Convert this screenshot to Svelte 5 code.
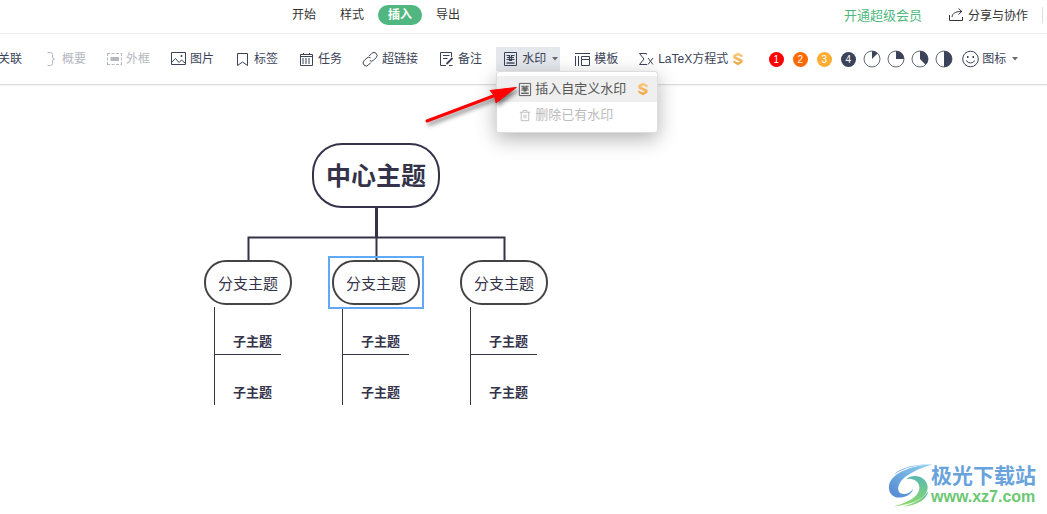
<script>
  const tabs = ["开始", "样式", "插入", "导出"];
  let activeTab = $state("插入");
  let menuOpen = $state(true);

  const tools = [
    { icon: "relation", label: "关联" },
    { icon: "summary", label: "概要", disabled: true },
    { icon: "frame", label: "外框", disabled: true },
    { icon: "image", label: "图片" },
    { icon: "tag", label: "标签" },
    { icon: "task", label: "任务" },
    { icon: "link", label: "超链接" },
    { icon: "note", label: "备注" },
    { icon: "watermark", label: "水印", menu: true },
    { icon: "template", label: "模板" },
    { icon: "sigma", label: "LaTeX方程式", vip: true },
  ];

  const priorities = [1, 2, 3, 4];
  const wedges = [
    { name: "12.5%", d: "M9 9V1A8 8 0 0 1 14.66 3.34Z" },
    { name: "25%", d: "M9 9V1A8 8 0 0 1 17 9Z" },
    { name: "37.5%", d: "M9 9V1A8 8 0 0 1 14.66 14.66Z" },
    { name: "50%", d: "M9 9V1A8 8 0 0 1 9 17Z" },
  ];

  const branches = [
    { x: 0, label: "分支主题", children: ["子主题", "子主题"] },
    { x: 128, label: "分支主题", children: ["子主题", "子主题"] },
    { x: 256, label: "分支主题", children: ["子主题", "子主题"] },
  ];
  let selected = $state(1);
</script>

{#snippet icon(name)}
  <svg class="icon" viewBox="0 0 16 16" aria-hidden="true">
    {#if name === "relation"}
      <path d="M2 12C3 5 8 3 13 5M10 2.5L13.5 5L10.5 8" />
    {:else if name === "summary"}
      <path d="M5.5 1.5H8.5Q10.5 1.5 10.5 3.5V6Q10.5 8 12.5 8Q10.5 8 10.5 10V12.5Q10.5 14.5 8.5 14.5H5.5" />
    {:else if name === "frame"}
      <path d="M1 2.5H16M1 13.5H16" stroke-dasharray="3 1.5" />
      <path d="M1.5 2V14M15.5 2V14" stroke-dasharray="3 1.5" />
      <path class="solid" d="M4.5 6H13V10H4.5Z" />
    {:else if name === "image"}
      <path d="M1.5 1.5H15.5V13.5H1.5ZM2 11L5.5 7.5L9 11.5L11.5 9L15 12" />
      <circle class="solid" cx="11.5" cy="5" r="1" />
    {:else if name === "tag"}
      <path d="M3.5 2.5H13.5V14.5L8.5 11L3.5 14.5Z" />
    {:else if name === "task"}
      <path d="M2.5 3.5H14.5V14.5H2.5ZM2.5 5.5H14.5M5.5 2V4M11.5 2V4" />
      <path d="M4 8H13M4 10H13M4 12H13" stroke-dasharray="2 1" />
    {:else if name === "link"}
      <path d="M7.2 5L9.8 2.4A3 3 0 0 1 14.2 6.6L11.4 9.4A3 3 0 0 1 7.8 9.6M8.8 11.6L6.4 14A3 3 0 0 1 2 9.8L4.8 7A3 3 0 0 1 8.6 6.8" />
    {:else if name === "note"}
      <path d="M13.5 6V1.5H2.5V14.5H8M5 4.5H11.5M5 7.5H9.5M11 14.5H14.5" />
      <path d="M8.5 13L14.5 7" stroke-width="1.8" />
    {:else if name === "watermark"}
      <path d="M2.5 1.5H14.5V14.5H2.5Z" />
      <path d="M4.5 12H12.5" stroke-width="1.4" />
      <path d="M4.5 4.5H7.5M9.5 4.5H12.5M5 6.5H12M4.5 8.5H12.5M7 9.5H10M7.5 4V9M9.5 4V9" stroke-width="1.2" />
    {:else if name === "template"}
      <path d="M1 2.5H16M1.5 5V15M4.5 5V15M7.5 5.5H15.5V8.5H7.5ZM7.5 8.5V14.5H15.5V8.5" />
    {:else if name === "sigma"}
      <path d="M8.5 3.5V2.5H1.5L6 8L1.5 13.5H9M10 7L15 13.5M15 7L10 13.5" />
    {:else if name === "smile"}
      <circle cx="8.5" cy="8" r="7.8" />
      <path d="M4 9.5Q8.5 14.5 13 9.5" />
      <path class="solid" d="M5 5H6.5V7H5ZM10.5 5H12V7H10.5Z" />
    {:else if name === "trash"}
      <path d="M3 4.5H14M6.5 4V2.5H10.5V4M4.5 4.5V13.5H12.5V4.5M7.5 7V11M9.5 7V11" />
    {:else if name === "share"}
      <path d="M1.5 8V13.5H14.5V10M4 10C4.5 6.5 7 4.5 13.5 4.5M10.5 1.5L13.8 4.5L10.5 7.5" />
    {/if}
  </svg>
{/snippet}

{#snippet vipMark()}
  <svg class="vip" viewBox="0 0 12 14" aria-hidden="true">
    <defs>
      <linearGradient id="gold" x1="0" y1="0" x2="0" y2="1">
        <stop offset="0" stop-color="#fbcd85" />
        <stop offset="1" stop-color="#eea23c" />
      </linearGradient>
    </defs>
    <path d="M6 .5L10.5 3V5.4L6.2 3.4L3.8 4.6L10.5 7.8V10.6L6 13.3L1.3 10.6V8.3L6 10.6L8 9.4L1.3 6.2V3.1Z" fill="url(#gold)" />
  </svg>
{/snippet}

{#snippet caret()}
  <svg class="caret" viewBox="0 0 8 4" aria-hidden="true"><path d="M2 0H8L5 3.5Z" /></svg>
{/snippet}

<div class="app">
  <header>
    <nav class="tabs">
      {#each tabs as tab}
        <button class="tab" class:active={activeTab === tab} onclick={() => (activeTab = tab)}>{tab}</button>
      {/each}
    </nav>
    <div class="account">
      <a class="upgrade" href="#vip">开通超级会员</a>
      <button class="share">{@render icon("share")}分享与协作</button>
      <span class="divider"></span>
    </div>
  </header>

  <div class="toolbar">
    {#each tools as tool}
      <div class="slot">
        <button
          class="tool"
          class:has-menu={tool.menu}
          class:open={tool.menu && menuOpen}
          disabled={tool.disabled}
          onclick={() => { if (tool.menu) menuOpen = !menuOpen; }}
        >
          {@render icon(tool.icon)}
          <span>{tool.label}</span>
          {#if tool.vip}{@render vipMark()}{/if}
          {#if tool.menu}{@render caret()}{/if}
        </button>
        {#if tool.menu && menuOpen}
          <div class="menu">
            <button class="menu-item hover">
              {@render icon("watermark")}<span>插入自定义水印</span>{@render vipMark()}
            </button>
            <button class="menu-item" disabled>
              {@render icon("trash")}<span>删除已有水印</span>
            </button>
          </div>
        {/if}
      </div>
    {/each}

    <div class="markers">
      {#each priorities as p}
        <button class="marker"><span class="dot p{p}">{p}</span></button>
      {/each}
      {#each wedges as w}
        <button class="marker" aria-label={w.name}>
          <svg class="pie" viewBox="0 0 18 18">
            <circle cx="9" cy="9" r="8" />
            <path d={w.d} />
          </svg>
        </button>
      {/each}
    </div>
    <button class="tool has-menu">{@render icon("smile")}<span>图标</span>{@render caret()}</button>
  </div>

  <main>
    <div class="mindmap">
      <svg class="lines" viewBox="0 0 344 262">
        <path class="stem" d="M172.5 64V95" />
        <path class="trunk" d="M44.5 118V94.5H300.5V118M172.5 94V118" />
        {#each branches as b}
          <path class="twig" d="M{b.x + 10.5} 164V262M{b.x + 10.5} 211.5H{b.x + 77}" />
        {/each}
      </svg>
      <button class="root">中心主题</button>
      {#each branches as b, i}
        <div class="branch" style="left: {b.x}px">
          <button class="topic" class:selected={selected === i} onclick={() => (selected = i)}>{b.label}</button>
          {#each b.children as child}
            <span class="child">{child}</span>
          {/each}
        </div>
      {/each}
    </div>

    <!-- Pointer to the menu entry -->
    <svg class="arrow" viewBox="0 0 100 44" aria-hidden="true">
      <path d="M5 37L74 11" />
      <path class="head" d="M94 3.5L68 6.5L72.5 11.5L74 18.5Z" />
    </svg>

    <div class="brand">
      <svg class="brand-logo" viewBox="10 6 130 132" aria-hidden="true">
        <defs>
          <linearGradient id="sky" x1="1" y1="0" x2="0" y2="1">
            <stop offset="0" stop-color="#8fd4ee" />
            <stop offset="1" stop-color="#5286d0" />
          </linearGradient>
          <linearGradient id="leaf" x1="0" y1="0" x2="0" y2="1">
            <stop offset="0" stop-color="#58b8b0" />
            <stop offset="1" stop-color="#8edb6c" />
          </linearGradient>
        </defs>
        <path d="M145 9C95 12 28 28 14 68C8 92 22 112 48 110C68 108 84 96 86 84C76 98 56 104 45 95C34 82 46 60 62 48C82 32 110 20 145 9Z" fill="url(#sky)" />
        <path d="M136 9C96 8 50 18 28 40C60 18 96 12 136 9Z" fill="url(#sky)" />
        <path d="M64 54C90 34 128 48 130 78C130 112 88 130 26 137C68 125 104 108 105 80C104 62 88 50 64 54Z" fill="url(#leaf)" />
        <path d="M132 90C128 116 100 132 56 138C92 126 118 112 132 90Z" fill="url(#leaf)" />
      </svg>
      <div class="brand-text">
        <strong>极光下载站</strong>
        <span>www.xz7.com</span>
      </div>
    </div>
  </main>
</div>

<style>
  :global(body) { background: #fff; }
  .app { min-height: 100vh; display: flex; flex-direction: column; overflow: hidden; font-family: "Liberation Sans", "Noto Sans CJK SC", sans-serif; font-size: 12px; color: #333; }
  button { font: inherit; color: inherit; background: none; border: none; padding: 0; margin: 0; cursor: pointer; white-space: nowrap; }
  button:disabled { cursor: default; }

  header { height: 33px; display: flex; align-items: flex-start; justify-content: space-between; border-bottom: 1px solid #eee; }
  .tabs { display: flex; gap: 4px; padding: 5px 0 0 282px; }
  .tab { height: 20px; line-height: 20px; padding: 0 10px; border-radius: 10px; }
  .tab.active { background: #50b780; color: #fff; font-weight: 700; }
  .account { display: flex; align-items: center; height: 29px; padding-right: 4px; }
  .upgrade { color: #50b780; font-size: 13px; text-decoration: none; margin-right: 26px; }
  .share { display: flex; align-items: center; gap: 4px; margin-right: 14px; }
  .divider { width: 1px; height: 16px; background: #ddd; }

  .icon { width: 16px; height: 16px; flex: none; overflow: visible; fill: none; stroke: currentColor; stroke-width: 1; }
  .icon .solid { fill: currentColor; stroke: none; }
  .vip { width: 12px; height: 14px; flex: none; }
  .caret { width: 8px; height: 4px; fill: #666c78; }

  .toolbar { display: flex; align-items: center; gap: 8px; height: 50px; margin-left: -28px; border-bottom: 1px solid #ddd; box-shadow: 0 1px 2px rgba(0, 0, 0, 0.05); color: #3b4358; }
  .slot { position: relative; flex: none; }
  .tool { display: flex; align-items: center; gap: 4px; height: 24px; line-height: 16px; padding: 0 6px; flex: none; }
  .tool:disabled { color: #b4b7be; }
  .tool.has-menu { padding-right: 2px; }
  .tool.open { background: #e4e7ec; }

  .menu { position: absolute; z-index: 2; top: 100%; left: 0; width: 162px; box-sizing: border-box; padding: 4px 0; background: #fff; border: 1px solid #ddd; border-radius: 3px; box-shadow: 0 6px 20px rgba(0, 0, 0, 0.3); font-size: 13px; color: #555; }
  .menu-item { display: flex; align-items: center; gap: 3px; width: 100%; height: 26px; line-height: 18px; padding: 0 6px 0 20px; }
  .menu-item .icon { width: 15px; height: 15px; }
  .menu-item:disabled { color: #bbb; }
  .menu-item.hover { background: #efefef; }
  .menu-item .vip { margin-left: 8px; }

  .markers { display: flex; margin-left: 6px; margin-right: -8px; }
  .marker { width: 24px; height: 24px; display: flex; align-items: center; justify-content: center; }
  .dot { width: 15px; height: 15px; line-height: 15px; border-radius: 50%; color: #fff; font-size: 10px; text-align: center; }
  .p1 { background: #f00; }
  .p2 { background: #ff6a00; }
  .p3 { background: #ffae35; }
  .p4 { background: #3b4358; }
  .pie { width: 18px; height: 18px; }
  .pie circle { fill: none; stroke: #3b4358; stroke-width: 0.8; }
  .pie path { fill: #3b4358; }

  main { position: relative; flex: 1; }
  .mindmap { position: absolute; left: 204px; top: 58px; width: 344px; height: 262px; color: #34334a; }
  .lines { position: absolute; left: 0; top: 0; width: 344px; height: 262px; fill: none; stroke: #34334a; }
  .stem { stroke-width: 3; }
  .trunk { stroke-width: 2; }
  .twig { stroke-width: 1; }
  .root { position: absolute; left: 108px; top: 0; width: 128px; height: 65px; border: 2px solid #34334a; border-radius: 30px; background: #fff; font-size: 25px; line-height: 32px; font-weight: 700; }
  .branch { position: absolute; top: 117px; width: 88px; display: flex; flex-direction: column; }
  .topic { height: 45px; margin-bottom: 12px; border: 2px solid #444; border-radius: 22px; background: #fff; font-size: 15px; }
  .topic.selected { position: relative; }
  .topic.selected::after { content: ""; position: absolute; inset: -6px; border: 2px solid #61a8f5; }
  .child { height: 51px; line-height: 50px; padding-left: 29px; font-size: 13px; font-weight: 700; }

  .arrow { position: absolute; z-index: 3; left: 422px; top: 0; width: 100px; height: 44px; margin-top: -1px; overflow: visible; fill: none; stroke: #f00; stroke-width: 3; stroke-linecap: round; filter: drop-shadow(2px 3px 2px rgba(0, 0, 0, 0.5)); }
  .arrow .head { fill: #f00; stroke-width: 1; }

  .brand { position: absolute; right: 11px; bottom: 7px; display: flex; align-items: center; }
  .brand-logo { width: 43px; height: 44px; overflow: visible; }
  .brand-text { display: flex; flex-direction: column; }
  .brand-text strong { font-size: 21px; line-height: 24px; color: #69a3dc; }
  .brand-text span { font-size: 16px; line-height: 18px; font-weight: 700; color: #6bc872; }
</style>
